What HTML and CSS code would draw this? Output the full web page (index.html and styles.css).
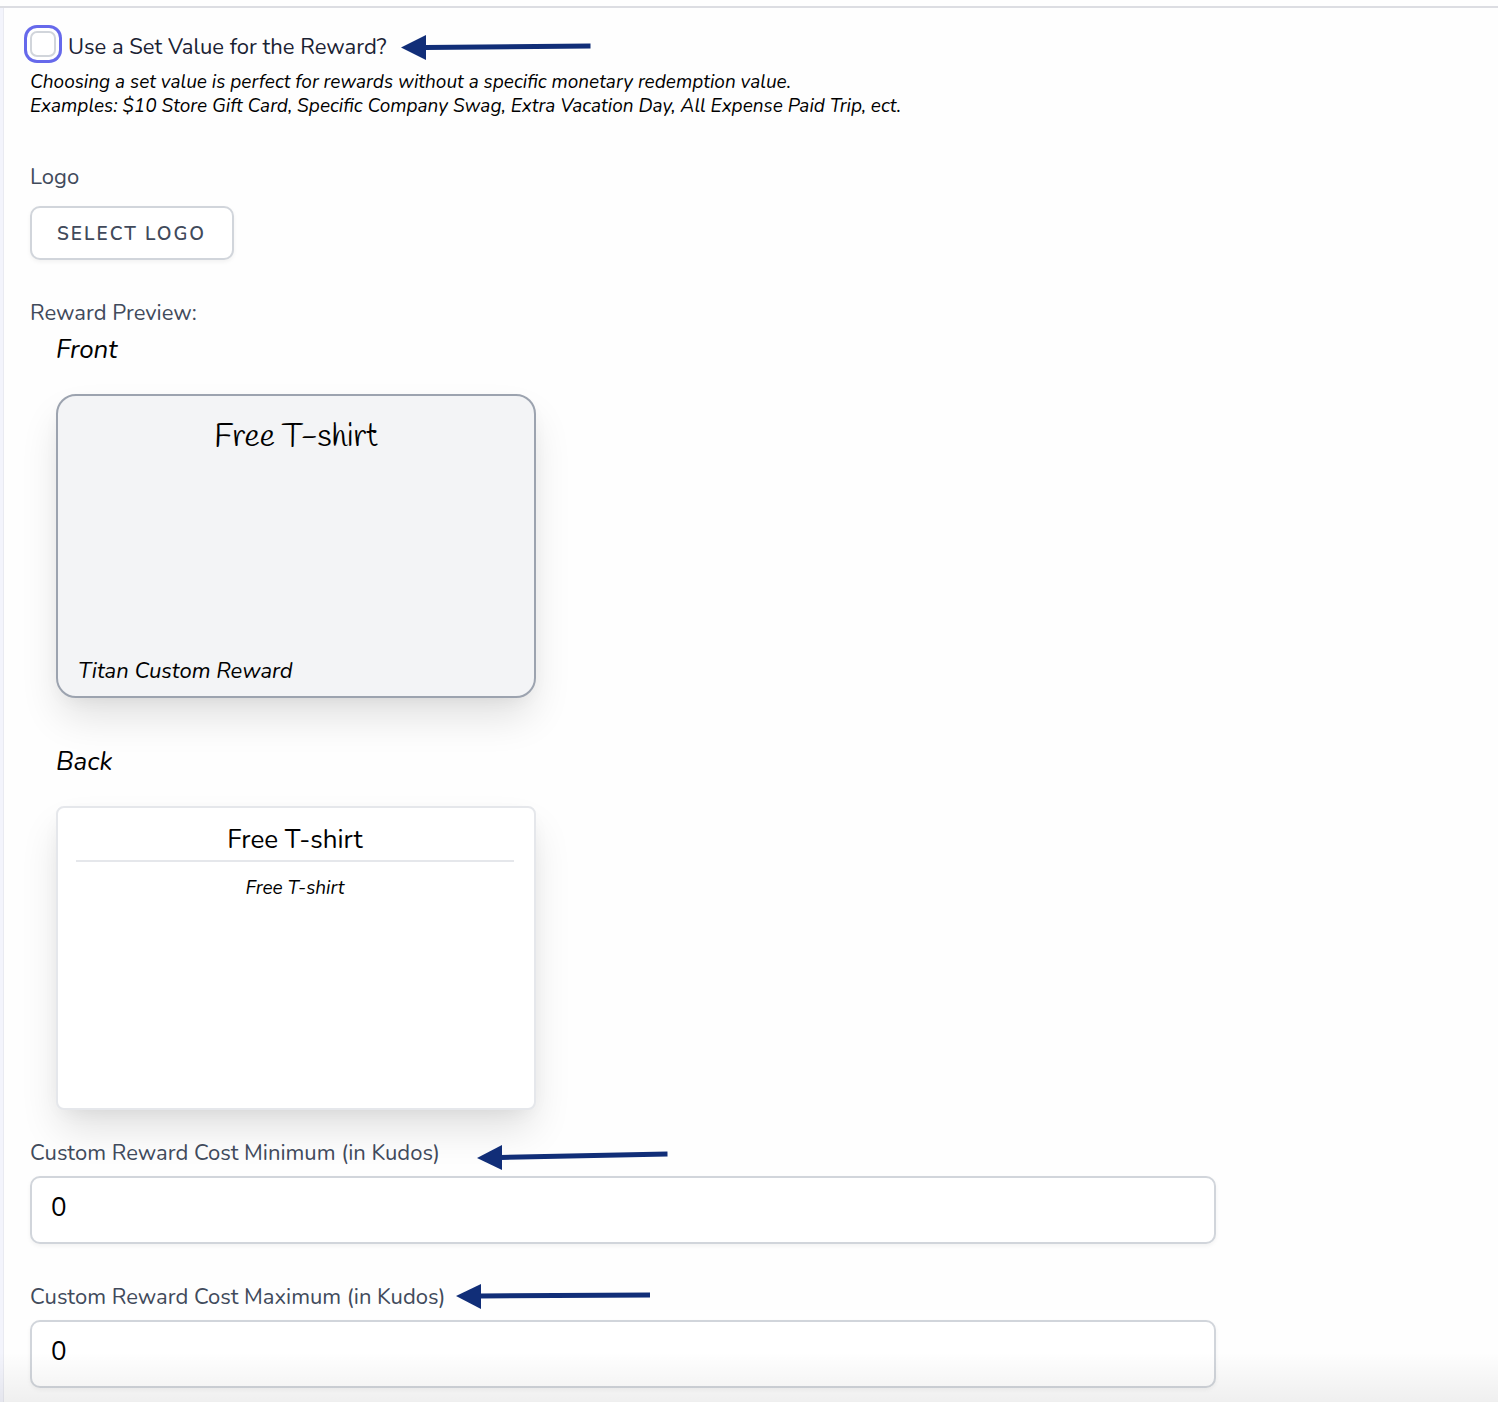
FILE: index.html
```html
<!DOCTYPE html>
<html lang="en">
<head>
<meta charset="utf-8">
<meta name="viewport" content="width=device-width, initial-scale=1">
<title>Custom Reward</title>
<link rel="stylesheet" href="styles.css">
</head>
<body>
<div class="page">
  <main class="panel">
    <form class="form">
      <section class="set-value">
        <div class="check-row">
          <input class="checkbox" type="checkbox" id="set-value">
          <label class="check-label" for="set-value">Use a Set Value for the Reward?</label>
          <svg class="arrow arrow-set" width="190" height="26" viewBox="0 0 190 26" aria-hidden="true"><path d="M24 13.500 L189.500 12" stroke="#112e78" stroke-width="5"/><path d="M0 13.500 L25 1 V26 Z" fill="#112e78"/></svg>
        </div>
        <p class="hint">Choosing a set value is perfect for rewards without a specific monetary redemption value.<br>Examples: $10 Store Gift Card, Specific Company Swag, Extra Vacation Day, All Expense Paid Trip, ect.</p>
      </section>

      <section class="logo">
        <span class="label">Logo</span>
        <button class="button" type="button">Select Logo</button>
      </section>

      <section class="preview">
        <h2 class="label">Reward Preview:</h2>
        <div class="sides">
          <h3 class="side-name">Front</h3>
          <article class="card card-front">
            <p class="front-title">Free T-shirt</p>
            <p class="front-brand">Titan Custom Reward</p>
          </article>
          <h3 class="side-name">Back</h3>
          <article class="card card-back">
            <p class="back-title">Free T-shirt</p>
            <p class="back-text">Free T-shirt</p>
          </article>
        </div>
      </section>

      <div class="field">
        <label class="label" for="cost-min">Custom Reward Cost Minimum (in Kudos)</label>
        <svg class="arrow arrow-min" width="192" height="28" viewBox="0 0 192 28" aria-hidden="true"><path d="M24 14.500 L190.500 11" stroke="#112e78" stroke-width="5"/><path d="M0 15 L25 2 V27 Z" fill="#112e78"/></svg>
        <input class="input" id="cost-min" type="text" inputmode="numeric" value="0">
      </div>
      <div class="field">
        <label class="label" for="cost-max">Custom Reward Cost Maximum (in Kudos)</label>
        <svg class="arrow arrow-max" width="194" height="28" viewBox="0 0 194 28" aria-hidden="true"><path d="M24 14 L194 13" stroke="#112e78" stroke-width="5"/><path d="M0 14 L25 2 V27 Z" fill="#112e78"/></svg>
        <input class="input" id="cost-max" type="text" inputmode="numeric" value="0">
      </div>
    </form>
  </main>
  <div class="fade"></div>
</div>
</body>
</html>
```
FILE: styles.css
```css
* { box-sizing: border-box; }

body {
  margin: 0;
  background: #fefefe;
  color: #000;
  font-family: Nunito, Lato, "Open Sans", sans-serif;
  font-size: 22px;
}

h2, h3, p { margin: 0; font-weight: 400; }

.page {
  position: relative;
  padding-top: 6px;
}

.panel {
  border-top: 2px solid #dcdde2;
  padding: 23px 26px 14px 30px;
  background: linear-gradient(to right, #f3f4fc 3px, #e9eaf1 3px, #e9eaf1 4px, #fefefe 4px);
}

.form {
  display: flex;
  flex-direction: column;
  max-width: 1186px;
}

.set-value { padding-bottom: 44px; }

.check-row {
  position: relative;
  display: flex;
  gap: 12px;
  margin-bottom: 7px;
}

.checkbox {
  appearance: none;
  width: 26px;
  height: 26px;
  margin: 0;
  border: 2px solid #d1d5db;
  border-radius: 7px;
  background: #fff;
  box-shadow: 0 0 0 3px #fff, 0 0 0 6px #6669eb;
}

.check-label {
  color: #1a2233;
  line-height: 32px;
}

.hint {
  font-size: 19px;
  font-style: italic;
  line-height: 24px;
}

.label {
  display: block;
  color: #414a5b;
  font-size: 22px;
  line-height: 30px;
}

.logo { padding-bottom: 38px; }

.button {
  display: block;
  height: 54px;
  margin-top: 14px;
  padding: 2px 26px 0 25px;
  border: 2px solid #d1d5db;
  border-radius: 10px;
  background: #fff;
  box-shadow: 0 2px 4px rgba(0, 0, 0, .05);
  color: #414a5b;
  font: 600 19px Nunito, Lato, "Open Sans", sans-serif;
  letter-spacing: 2px;
  text-transform: uppercase;
}

.sides { padding: 2px 26px 0; }

.side-name {
  font-size: 26px;
  font-style: italic;
  line-height: 40px;
}

.card {
  display: flex;
  flex-direction: column;
  width: 480px;
  max-width: 100%;
  min-height: 304px;
  margin-top: 24px;
  border: 2px solid #e5e7eb;
  box-shadow: 0 22px 40px -4px rgba(0, 0, 0, .12), 0 6px 20px -8px rgba(0, 0, 0, .08);
}

.card-front {
  justify-content: space-between;
  margin-bottom: 44px;
  padding: 20px 20px 10px;
  border-color: #9ca3af;
  border-radius: 20px;
  background: #f3f4f6;
}

.front-title {
  font-family: Handlee, Lato, cursive;
  font-size: 32px;
  line-height: 44px;
  text-align: center;
}

.front-brand {
  font-size: 22px;
  font-style: italic;
  line-height: 30px;
}

.card-back {
  padding: 12px 20px 12px 18px;
  border-radius: 8px;
  background: #fff;
  text-align: center;
}

.back-title {
  border-bottom: 2px solid #e5e7eb;
  font-size: 26px;
  line-height: 40px;
}

.back-text {
  margin-top: 14px;
  font-size: 19px;
  font-style: italic;
  line-height: 24px;
}

.field {
  position: relative;
  padding-top: 28px;
}

.field + .field { padding-top: 38px; }

.input {
  display: block;
  width: 100%;
  height: 68px;
  margin-top: 8px;
  padding: 0 19px 6px;
  border: 2px solid #d1d5db;
  border-radius: 10px;
  background: #fff;
  box-shadow: 0 2px 4px rgba(0, 0, 0, .05);
  color: #000;
  font: 26px Nunito, Lato, "Open Sans", sans-serif;
}

/* Callout arrows drawn over the form */
.arrow { position: absolute; pointer-events: none; }
.arrow-set { left: 371px; top: 3px; }
.arrow-min { left: 447px; top: 33px; }
.arrow-max { left: 426px; top: 38px; }

.fade {
  position: absolute;
  right: 0;
  bottom: 0;
  left: 0;
  height: 50px;
  background: linear-gradient(rgba(0, 0, 0, 0), rgba(0, 0, 0, .06));
  pointer-events: none;
}
```
